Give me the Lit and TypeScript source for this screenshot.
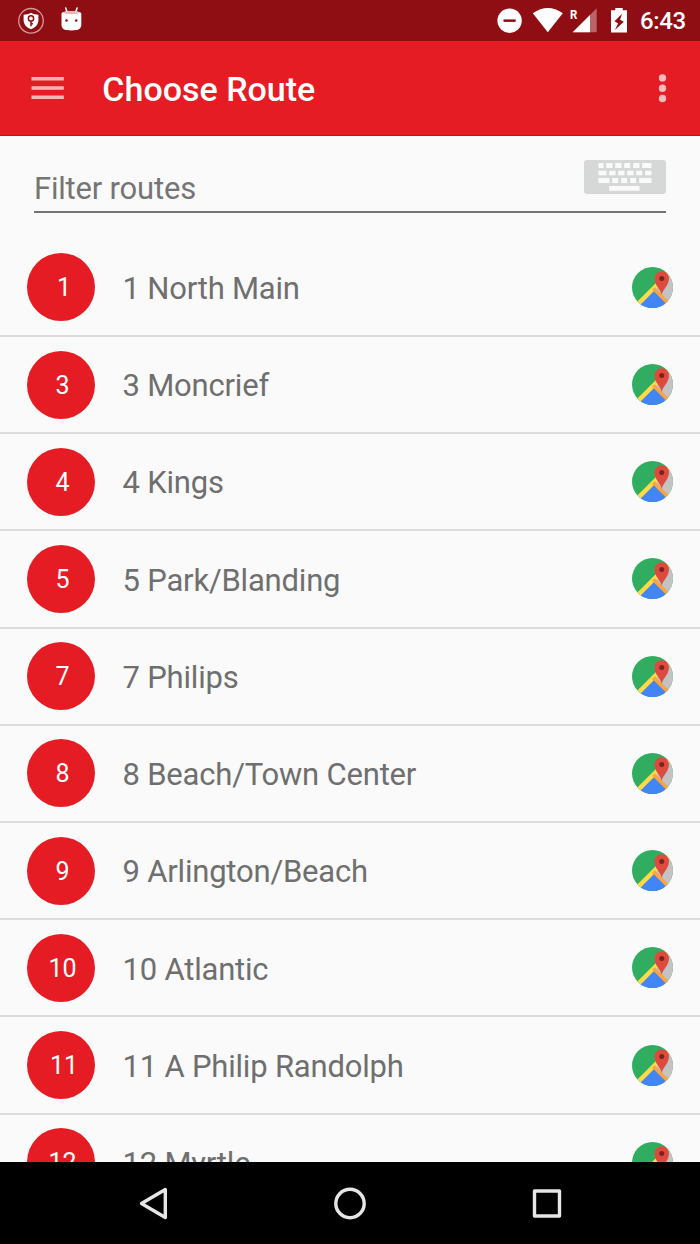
import { LitElement, html, css } from "lit";
import { customElement, property } from "lit/decorators.js";

interface Route {
  id: string;
  name: string;
}

const ROUTES: Route[] = [
  { id: "1", name: "North Main" },
  { id: "3", name: "Moncrief" },
  { id: "4", name: "Kings" },
  { id: "5", name: "Park/Blanding" },
  { id: "7", name: "Philips" },
  { id: "8", name: "Beach/Town Center" },
  { id: "9", name: "Arlington/Beach" },
  { id: "10", name: "Atlantic" },
  { id: "11", name: "A Philip Randolph" },
  { id: "12", name: "Myrtle" },
];

@customElement("status-bar")
class StatusBar extends LitElement {
  static styles = css`
    :host { display: flex; height: 41px; background: #8f0e13; color: #fff; flex: none; }
    .left { display: block; width: 120px; height: 41px; }
    .right { display: block; width: 160px; height: 41px; margin-left: auto; }
    .clock { width: 60px; line-height: 43px; font-size: 24px; font-weight: 500; letter-spacing: -0.35px; white-space: nowrap; }
    .roaming { font: 700 13.5px Roboto, sans-serif; }
  `;
  render() {
    return html`
      <svg class="left" viewBox="0 0 120 41">
        <circle cx="31" cy="20.8" r="12.3" fill="none" stroke="#d79a9c" stroke-width="1.3" />
        <path d="M31 12.8C28.5 14.4 26 14.7 23.6 14.7V20c0 4.5 3 7.5 7.4 9.2 4.4-1.7 7.4-4.7 7.4-9.2v-5.3C36 14.7 33.5 14.4 31 12.8z" fill="#fff" />
        <circle cx="31" cy="18.4" r="2.6" fill="none" stroke="#8f0e13" stroke-width="1.5" />
        <path d="M31 21v5.300M31 23.800h1.900" fill="none" stroke="#8f0e13" stroke-width="1.5" />
        <path d="M65.700 8l1.600 4.500M77.100 8l-1.600 4.500" stroke="#fff" stroke-width="1.5" stroke-linecap="round" />
        <path d="M61.500 13.500c0-3.400 19.800-3.400 19.800 0v11.500c0 3-2.300 4.800-5 5.100q-4.900.7-9.800 0c-2.700-.3-5-2.100-5-5.100z" fill="#fff" />
        <path d="M63 12.800c2.500-2.300 14.300-2.300 16.800 0-2.500 1.800-14.300 1.800-16.800 0z" fill="#e5b5b7" />
        <circle cx="66.500" cy="20.500" r="1.300" fill="#8f0e13" />
        <circle cx="76.200" cy="20.500" r="1.300" fill="#8f0e13" />
      </svg>
      <svg class="right" viewBox="480 0 160 41">
        <circle cx="509.600" cy="20.700" r="12.200" fill="#fff" />
        <rect x="503.500" y="19.400" width="12.200" height="2.500" fill="#8f0e13" />
        <path d="M532.800 13.300Q547.800 2.700 562.800 13.300L547.800 32.200z" fill="#fff" />
        <text class="roaming" x="569.900" y="18.900" textLength="7.300" lengthAdjust="spacingAndGlyphs" fill="#fff">R</text>
        <path d="M596.700 8.200V32.200H572.700z" fill="#b96468" />
        <path d="M590 14.900V32.200H572.700z" fill="#fff" />
        <path d="M611 10.200h4.300V8h7.400v2.200h4.300v22.300h-16z" fill="#fff" />
        <path d="M622 13.700l-7.500 7.500 3.600 2.200-3.200 6.600 8.900-8.300-3.700-2z" fill="#8f0e13" />
      </svg>
      <span class="clock">6:43</span>
    `;
  }
}

@customElement("app-toolbar")
class AppToolbar extends LitElement {
  static styles = css`
    :host {
      display: flex; align-items: center; flex: none; box-sizing: border-box; height: 95px;
      padding: 0 33px 0 31px; background: #e51c23; border-bottom: 1px solid #d4080d; color: #fff;
    }
    .menu { display: block; width: 33px; height: 24px; margin-right: 38.300px; }
    .title { font-size: 34px; font-weight: 500; line-height: 40px; padding-top: 2px; }
    .more { display: block; width: 9px; height: 30px; margin-left: auto; }
  `;
  render() {
    return html`
      <svg class="menu" viewBox="0 0 33 24">
        <path d="M.500 2.700h32.300M.500 12h32.300M.500 21.200h32.300" stroke="#f7b4b7" stroke-width="3.600" />
      </svg>
      <span class="title">Choose Route</span>
      <svg class="more" viewBox="0 0 9 30">
        <g fill="#f9bbbd">
          <circle cx="4.500" cy="4.900" r="3.700" /><circle cx="4.500" cy="15.200" r="3.700" /><circle cx="4.500" cy="25.500" r="3.700" />
        </g>
      </svg>
    `;
  }
}

@customElement("filter-field")
class FilterField extends LitElement {
  static styles = css`
    :host { display: block; flex: none; height: 103.700px; padding: 0 34px; box-sizing: border-box; }
    .field {
      display: flex; box-sizing: border-box; height: 77px; padding-top: 24px;
      border-bottom: 2px solid #747474; justify-content: space-between;
    }
    .hint { font-size: 31px; letter-spacing: -0.2px; line-height: 36px; padding-top: 11px; color: #757575; }
    .keyboard { display: block; width: 82px; height: 34px; }
  `;
  render() {
    return html`
      <div class="field">
        <span class="hint">Filter routes</span>
        <svg class="keyboard" viewBox="72.500 330 246 102">
          <rect x="72.500" y="330" width="246" height="102" rx="9" fill="#d6d8d7" />
          <path
            fill="#fafafa"
            d="M116 339h15v15h-15zM139 339h19v15h-19zM166 339h19v15h-19zM193 339h18v15h-18zM220 339h19v15h-19zM247 339h28v15h-28zM116 362h24v14h-24zM148 362h19v14h-19zM175 362h19v14h-19zM202 362h19v14h-19zM229 362h18v14h-18zM256 362h19v14h-19zM116 384h33v15h-33zM157 384h18v15h-18zM184 384h18v15h-18zM211 384h18v15h-18zM238 384h37v15h-37zM148 408h91v14h-91z"
          />
        </svg>
      </div>
    `;
  }
}

@customElement("route-row")
class RouteRow extends LitElement {
  @property({ attribute: false }) route!: Route;
  static styles = css`
    :host {
      display: flex; align-items: center; flex: none; box-sizing: border-box; height: 97.220px;
      padding: 0 27px; border-bottom: 2px solid #dcdcdc;
    }
    .badge {
      display: flex; align-items: center; justify-content: center; box-sizing: border-box;
      width: 68px; height: 68px; padding: 2px 0 0 3px; border-radius: 50%;
      background: #e51c23; color: #fff; font-size: 25px; line-height: 30px;
    }
    .badge.ones { padding-left: 6px; }
    .name {
      margin-left: 27.500px; padding-top: 3.500px; font-size: 31px; letter-spacing: -0.2px;
      line-height: 36px; color: #6f6f6f; white-space: nowrap;
    }
    .map { display: block; width: 41px; height: 41px; margin-left: auto; }
  `;
  render() {
    const ones = /^1+$/.test(this.route.id);
    return html`
      <span class="badge ${ones ? "ones" : ""}">${this.route.id}</span>
      <span class="name">${this.route.id} ${this.route.name}</span>
      <svg class="map" viewBox="36 37 122 122">
        <clipPath id="disc"><circle cx="97" cy="98" r="61" /></clipPath>
        <g clip-path="url(#disc)">
          <rect x="36" y="37" width="122" height="122" fill="#30ad61" />
          <path d="M97 103L164 36V170z" fill="#c3c3c3" />
          <path d="M97 103L170 176H24z" fill="#4285f4" />
          <path d="M49 152L156 45" stroke="#fedb45" stroke-width="13" />
          <path d="M100 101L144 145" stroke="#f9a445" stroke-width="11" />
        </g>
        <path d="M124.500 120C122 104 103 92 103 71a21.500 21.500 0 0 1 43 0C146 92 127 104 124.500 120z" fill="#dd4b3e" />
        <circle cx="124.500" cy="71" r="7.500" fill="#7b231e" />
      </svg>
    `;
  }
}

@customElement("nav-bar")
class NavBar extends LitElement {
  static styles = css`
    :host {
      display: grid; grid-template-columns: repeat(3, 36px); column-gap: 160.500px; justify-content: center;
      align-items: center; flex: none; height: 82px; background: #000;
    }
    .key { display: block; width: 36px; height: 36px; fill: none; stroke: #e6e6e6; stroke-width: 3.400; stroke-linejoin: round; }
  `;
  render() {
    return html`
      <svg class="key" viewBox="0 0 36 36"><path d="M29.300 4.500V32.500L5.500 18.500z" /></svg>
      <svg class="key" viewBox="0 0 36 36"><circle cx="18" cy="18.500" r="14.200" /></svg>
      <svg class="key" viewBox="0 0 36 36"><rect x="5.500" y="6" width="25" height="25" /></svg>
    `;
  }
}

@customElement("app-root")
class AppRoot extends LitElement {
  static styles = css`
    :host {
      display: flex; flex-direction: column; width: 700px; height: 1244px; overflow: hidden;
      background: #fafafa; font-family: Roboto, sans-serif;
    }
    .list { flex: 1; min-height: 0; overflow: hidden; display: flex; flex-direction: column; }
  `;
  render() {
    return html`
      <status-bar></status-bar>
      <app-toolbar></app-toolbar>
      <filter-field></filter-field>
      <div class="list">${ROUTES.map((r) => html`<route-row .route=${r}></route-row>`)}</div>
      <nav-bar></nav-bar>
    `;
  }
}
